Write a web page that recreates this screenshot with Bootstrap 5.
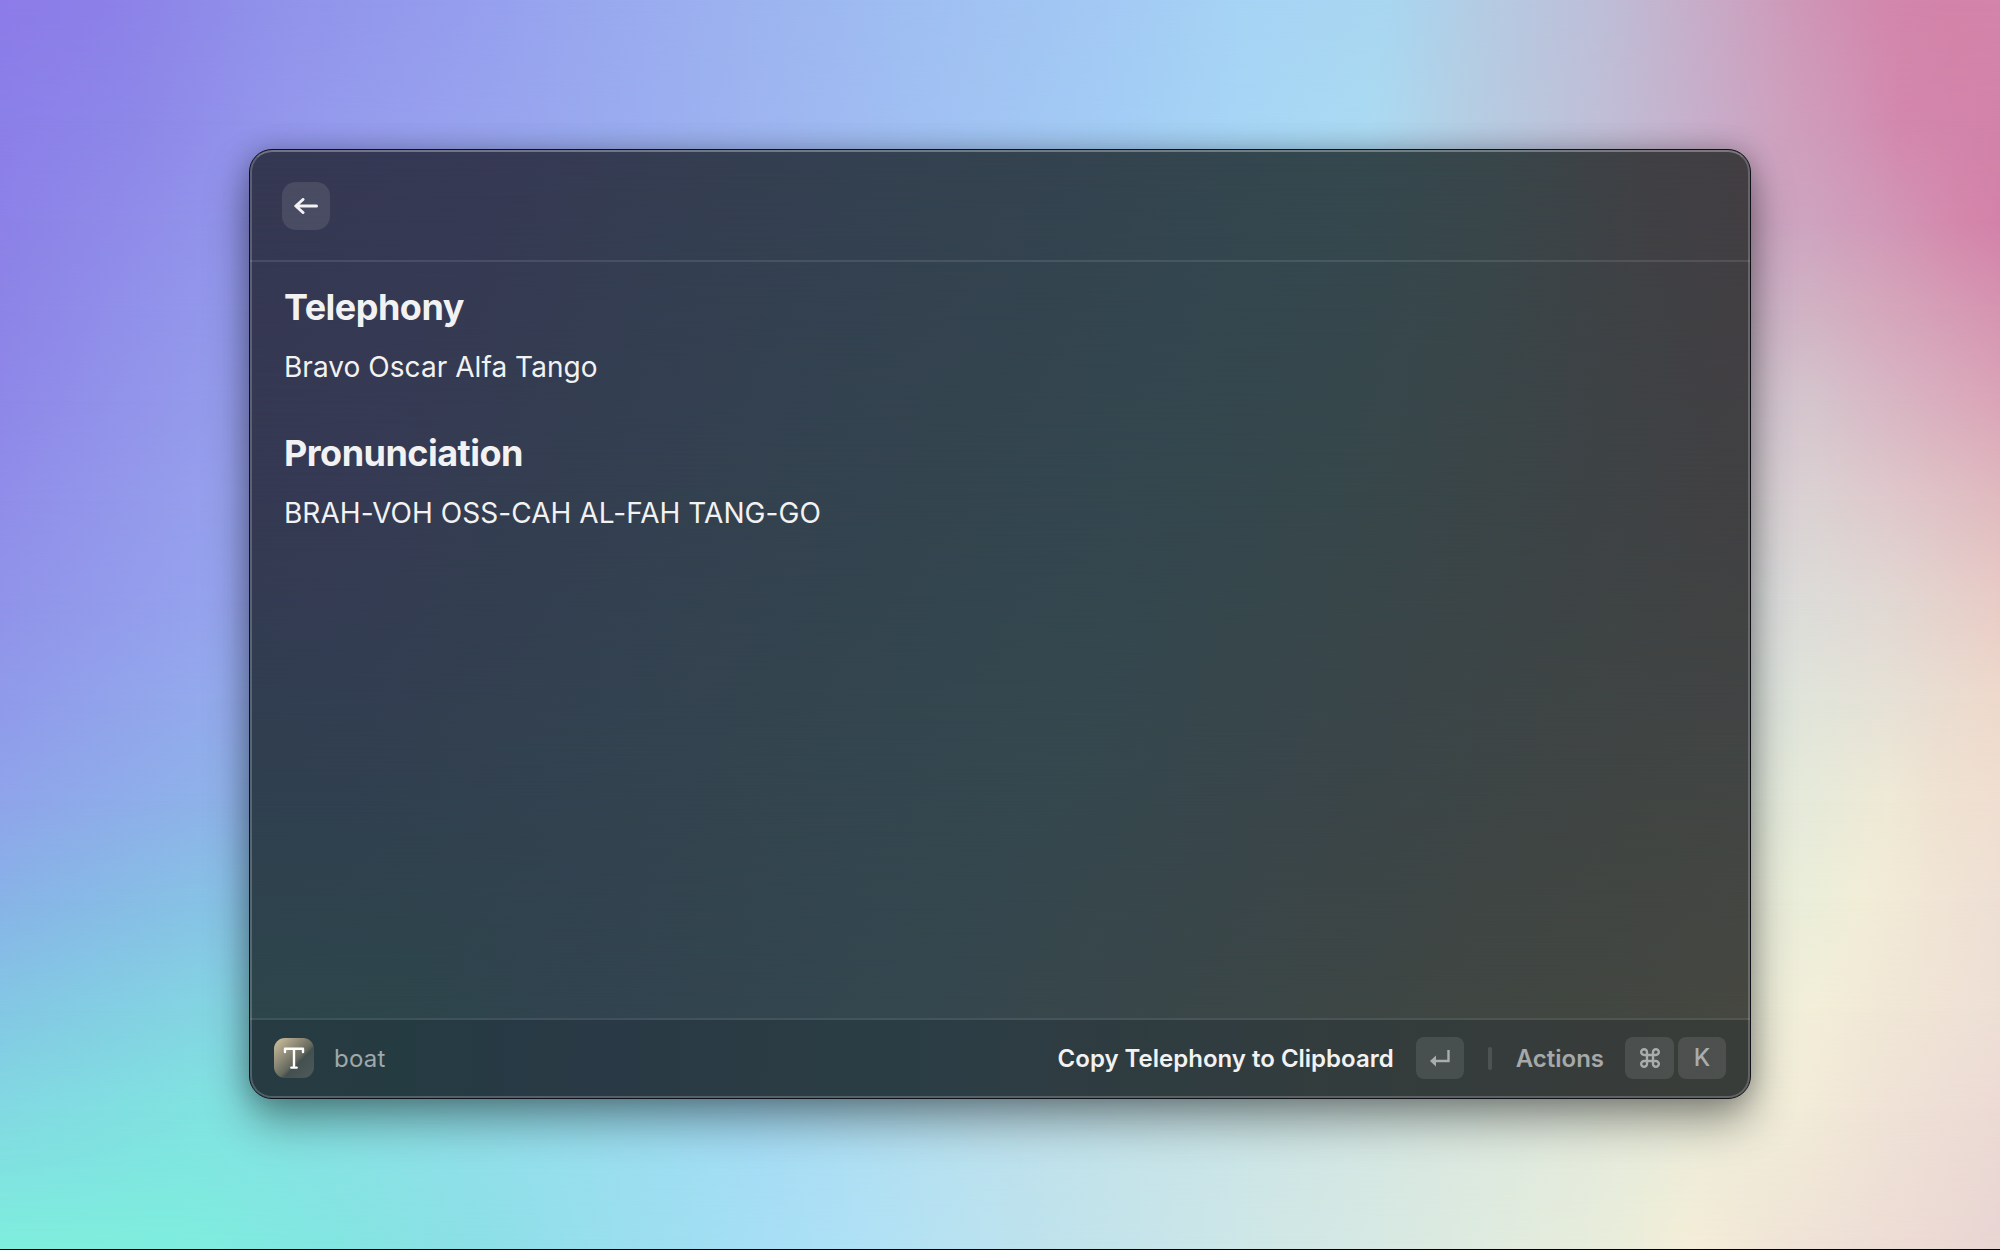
<!DOCTYPE html>
<html lang="en">
<head>
<meta charset="utf-8">
<title>Telephony</title>
<link href="https://cdn.jsdelivr.net/npm/bootstrap@5.3.0/dist/css/bootstrap.min.css" rel="stylesheet">
<style>
body{height:1250px;overflow:hidden;background:#000;font-family:Inter,sans-serif;color:#f2f2f2}
.desktop{height:1249px;isolation:isolate;overflow:hidden}
/* Horizontal colour bands; each fades in over the one before it, from --a to --b */
.band{inset:0;z-index:-1;-webkit-mask-image:linear-gradient(transparent var(--a),#000 var(--b));mask-image:linear-gradient(transparent var(--a),#000 var(--b))}
.band-0{--a:-2px;--b:-1px;background:linear-gradient(90deg,#8c7ce9 0,#8c80e8 100px,#9092ea 270px,#959eee 460px,#9bafef 680px,#9fbff2 920px,#a3c9f4 1100px,#a6d4f5 1240px,#a9d6f0 1390px,#b5cbe2 1490px,#bfbdd7 1610px,#c9a9c5 1720px,#cf97b8 1800px,#d288ac 1880px,#d383a8 1950px,#d384aa 2000px)}
.band-1{--a:0px;--b:120px;background:linear-gradient(90deg,#8b7fe8 0,#8d87e8 130px,#9498ec 300px,#98a6ee 540px,#9fbaf1 840px,#a2cbf4 1100px,#a6d5f5 1240px,#aadaf2 1370px,#b5cde2 1470px,#c0bdd5 1610px,#c9a9c6 1730px,#cea1be 1780px,#d194b6 1850px,#d387ac 1900px,#d282a8 2000px)}
.band-2{--a:120px;--b:220px;background:linear-gradient(90deg,#8c81e7 0,#9191ea 190px,#99aaee 500px,#a9d9f4 1300px,#cba5c2 1755px,#cea3bf 1810px,#d198b7 1880px,#d487ab 1960px,#d381a8 2000px)}
.band-3{--a:220px;--b:310px;background:linear-gradient(90deg,#8d84e7 0,#9296eb 190px,#a9d9f4 1000px,#cdb4c8 1755px,#d1b2c3 1815px,#d5a8bc 1880px,#d694b1 2000px)}
.band-4{--a:310px;--b:400px;background:linear-gradient(90deg,#8e88e8 0,#9499eb 190px,#a9d9f4 1000px,#d2c4d1 1755px,#d5c4cc 1815px,#d8b7c4 1885px,#dba4b7 2000px)}
.band-5{--a:400px;--b:500px;background:linear-gradient(90deg,#908de9 0,#959eec 190px,#a9d9f4 1000px,#d7d0d5 1755px,#dbd1d2 1815px,#dfc9cc 1885px,#e0babf 2000px)}
.band-6{--a:500px;--b:600px;background:linear-gradient(90deg,#9093e9 0,#95a1ed 190px,#a9d9f4 1000px,#d9dcdc 1755px,#dddbd8 1815px,#e1d8d3 1885px,#e9cbc6 2000px)}
.band-7{--a:600px;--b:700px;background:linear-gradient(90deg,#909aea 0,#93a9ec 190px,#a9d9f4 1000px,#dbe2dc 1755px,#e1e4d9 1815px,#e6e1d6 1885px,#eed9cb 2000px)}
.band-8{--a:700px;--b:800px;background:linear-gradient(90deg,#8fa4ea 0,#8eb1e9 190px,#a9d9f4 1000px,#e1e9dc 1755px,#e7ead9 1815px,#efe9d6 1890px,#efe2d1 1940px,#efdfd1 2000px)}
.band-9{--a:800px;--b:900px;background:linear-gradient(90deg,#88b3e7 0,#87c1e5 190px,#a9d9f4 1000px,#e8ecda 1755px,#ebeed9 1815px,#f2edd7 1865px,#f0e6d5 1930px,#eedfd4 2000px)}
.band-10{--a:900px;--b:1010px;background:linear-gradient(90deg,#83c7e4 0,#83d4e2 190px,#a9d9f4 1000px,#ecedda 1755px,#f3eed8 1815px,#f0e7d6 1890px,#eedfd5 2000px)}
.band-11{--a:1010px;--b:1110px;background:linear-gradient(90deg,#82d9e2 0,#80e3e0 200px,#a4dcf5 750px,#bde1ed 1000px,#cce5e6 1250px,#ebecda 1700px,#f2ecd8 1800px,#efe2d6 1890px,#ecdad4 2000px)}
.band-12{--a:1110px;--b:1249px;background:linear-gradient(90deg,#7eeedd 0,#7eedde 180px,#82e6e0 320px,#8bdfe5 470px,#a5def5 750px,#b0e1f5 870px,#bee2ec 1040px,#cde6e7 1240px,#dceadf 1460px,#e9edda 1620px,#f4edd7 1690px,#efe3d6 1790px,#ecdad4 1920px,#e8d4d2 2000px)}
.launcher{width:1502px;height:950px;margin-top:149px;border:1px solid #101018;border-radius:23px;overflow:hidden;background:#33444f;box-shadow:0 22px 44px rgba(0,0,0,.38),0 0 26px rgba(0,0,0,.22);isolation:isolate}
.tint-0{--a:-2px;--b:-1px;background:linear-gradient(94deg,#353852 0,#363954 240px,#343e51 440px,#33434f 800px,#34484e 1110px,#39464a 1250px,#404044 1390px,#433d42 1530px)}
.tint-1{--a:0px;--b:340px;background:linear-gradient(98deg,#353852 0,#363a54 150px,#343d51 290px,#33434f 620px,#34474e 960px,#37474a 1140px,#3c4446 1330px,#404143 1480px,#423f42 1600px)}
.tint-2{--a:340px;--b:620px;background:linear-gradient(99deg,#2f3f50 0,#313f50 200px,#33434f 480px,#34484e 900px,#3a4549 1180px,#3f4544 1400px,#424543 1600px)}
.tint-3{--a:620px;--b:860px;background:linear-gradient(94deg,#2c464a 0,#2d454b 220px,#31434f 390px,#34474e 720px,#394649 970px,#3f4643 1240px,#434641 1440px,#454740 1540px)}
.rim{inset:0;border:2px solid rgba(255,255,255,.2);border-top-color:rgba(255,255,255,.3);border-radius:22px;pointer-events:none}
.head-bar{height:112px;padding:2px 0 0 32px;border-bottom:2px solid rgba(255,255,255,.1)}
.back-btn{width:48px;height:48px;border-radius:14px;background:rgba(255,255,255,.1)}
.content{padding:23px 34px;color:#f2f2f2}
.content h1{font-size:36px;line-height:44px;font-weight:700;letter-spacing:-.52px;margin:0 0 18px}
.content p{font-size:28px;line-height:40px;letter-spacing:.05px;margin:0}
.content h1.next-title{margin-top:44px}
.foot-bar{height:80px;padding:0 24px 2px;border-top:2px solid rgba(255,255,255,.08);background:rgba(8,14,26,.18) padding-box;font-size:24px;line-height:30px;font-weight:600}
.foot-text{padding-top:2px}
.app-icon{width:40px;height:40px}
.soft{color:rgba(255,255,255,.56)}
.query{margin-left:20px;letter-spacing:.2px}
.key-cap{width:48px;height:42px;border-radius:8px;background:rgba(255,255,255,.1);color:#a9adad;font-weight:500}
.key-enter{margin-left:22px}
.key-cmd{width:49px;margin-left:21px}
.key-k{margin-left:4px}
.split{width:4px;height:23px;border-radius:2px;background:rgba(255,255,255,.12)}
.split,.more{margin-left:24px}
</style>
</head>
<body>
<main class="desktop position-relative d-flex justify-content-center align-items-start">
<div class="band band-0 position-absolute"></div>
<div class="band band-1 position-absolute"></div>
<div class="band band-2 position-absolute"></div>
<div class="band band-3 position-absolute"></div>
<div class="band band-4 position-absolute"></div>
<div class="band band-5 position-absolute"></div>
<div class="band band-6 position-absolute"></div>
<div class="band band-7 position-absolute"></div>
<div class="band band-8 position-absolute"></div>
<div class="band band-9 position-absolute"></div>
<div class="band band-10 position-absolute"></div>
<div class="band band-11 position-absolute"></div>
<div class="band band-12 position-absolute"></div>
<section class="launcher position-relative d-flex flex-column">
<div class="band tint-0 position-absolute"></div>
<div class="band tint-1 position-absolute"></div>
<div class="band tint-2 position-absolute"></div>
<div class="band tint-3 position-absolute"></div>
<header class="head-bar d-flex align-items-center flex-shrink-0">
<button class="back-btn btn border-0 p-0 d-flex align-items-center justify-content-center" aria-label="Back"><svg width="24" height="16" viewBox="0 0 24 16" fill="none" stroke="#f2f2f2" stroke-width="3" stroke-linecap="round" stroke-linejoin="round"><path d="M22.500 8H2M9 1.500L1.800 8L9 14.500"/></svg></button>
</header>
<article class="content flex-grow-1">
<h1>Telephony</h1>
<p>Bravo Oscar Alfa Tango</p>
<h1 class="next-title">Pronunciation</h1>
<p>BRAH-VOH OSS-CAH AL-FAH TANG-GO</p>
</article>
<footer class="foot-bar d-flex align-items-center flex-shrink-0">
<svg class="app-icon" viewBox="0 0 40 40"><defs><linearGradient id="g" x1="0" y1="0" x2="1" y2="1"><stop offset="0" stop-color="#d3c4a0"/><stop offset=".55" stop-color="#66695f"/><stop offset=".62" stop-color="#43504f"/><stop offset="1" stop-color="#4f5b5a"/></linearGradient></defs><rect width="40" height="40" rx="11" fill="url(#g)"/><path d="M11 14v-3.200h18V14M20 11v18.600M17.300 29.600h5.400" fill="none" stroke="#fff" stroke-width="2.400" stroke-linecap="round" stroke-linejoin="round"/></svg>
<span class="foot-text soft fw-normal query">boat</span>
<span class="foot-text ms-auto">Copy Telephony to Clipboard</span>
<span class="key-cap key-enter d-flex align-items-center justify-content-center"><svg width="22" height="18" viewBox="0 0 22 18"><path d="M19.500 1v11H5" fill="none" stroke="#a9adad" stroke-width="2.400"/><path d="M7 6.500v11L1 12z" fill="#a9adad"/></svg></span>
<span class="split"></span>
<span class="foot-text soft more">Actions</span>
<span class="key-cap key-cmd d-flex align-items-center justify-content-center"><svg width="20" height="20" viewBox="0 0 20 20" fill="none" stroke="#a9adad" stroke-width="2.400"><path d="M7 7h6v6H7zM7 7H4.200A2.900 2.900 0 1 1 7 4.200zM13 7V4.200A2.900 2.900 0 1 1 15.800 7zM13 13h2.800A2.900 2.900 0 1 1 13 15.800zM7 13v2.800A2.900 2.900 0 1 1 4.200 13z"/></svg></span>
<span class="key-cap key-k d-flex align-items-center justify-content-center">K</span>
</footer>
<div class="rim position-absolute"></div>
</section>
</main>
<script src="https://cdn.jsdelivr.net/npm/bootstrap@5.3.0/dist/js/bootstrap.bundle.min.js"></script>
</body>
</html>
